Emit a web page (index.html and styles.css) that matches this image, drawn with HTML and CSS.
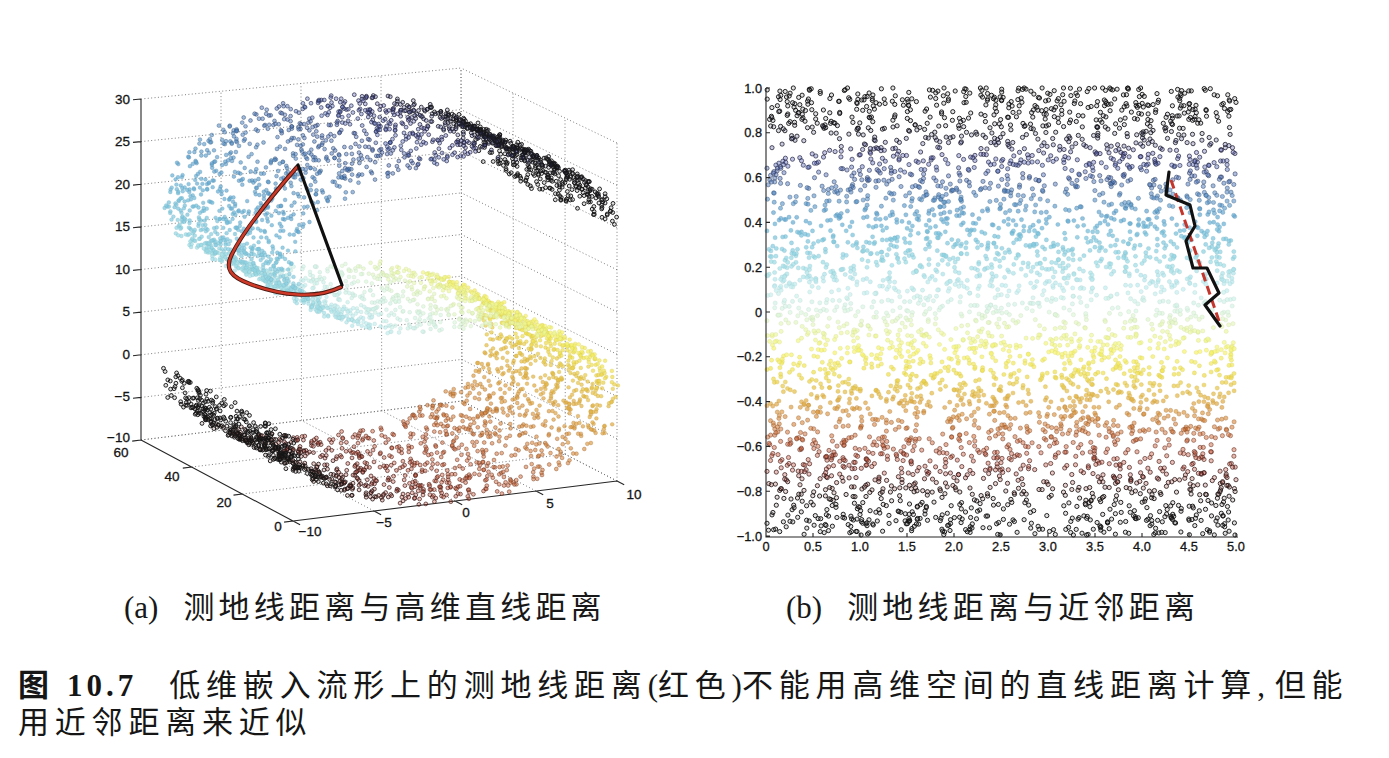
FILE: index.html
```html
<!DOCTYPE html>
<html lang="zh-CN">
<head>
<meta charset="utf-8">
<title>图 10.7 测地线距离</title>
<link rel="stylesheet" href="styles.css">
</head>
<body>
<main class="page">
  <div class="figures">
    <figure class="panel panel-a">
      <svg class="plot plot-a" viewBox="100 60 560 490" xmlns="http://www.w3.org/2000/svg">
        <g id="grid-a" class="grid"></g>
        <g id="axes-a" class="axis"></g>
        <g class="tick-labels">
          <text class="t-end" x="130" y="103.8">30</text>
          <text class="t-end" x="130" y="146.3">25</text>
          <text class="t-end" x="130" y="188.8">20</text>
          <text class="t-end" x="130" y="231.3">15</text>
          <text class="t-end" x="130" y="273.8">10</text>
          <text class="t-end" x="130" y="316.3">5</text>
          <text class="t-end" x="130" y="358.8">0</text>
          <text class="t-end" x="130" y="401.3">−5</text>
          <text class="t-end" x="130" y="442">−10</text>
          <text class="t-mid" x="121" y="457">60</text>
          <text class="t-mid" x="172" y="481">40</text>
          <text class="t-mid" x="224" y="506.5">20</text>
          <text class="t-mid" x="278" y="530.5">0</text>
          <text class="t-mid" x="310" y="536">−10</text>
          <text class="t-mid" x="384" y="527">−5</text>
          <text class="t-mid" x="466" y="517">0</text>
          <text class="t-mid" x="550" y="508">5</text>
          <text class="t-mid" x="634" y="499">10</text>
        </g>
        <g id="points-a"></g>
        <path class="geo-under" d="M297 167 C277 190 246 226 232 254 C224 269 231 277 250 284 C280 295 315 300 341 287"/>
        <path class="geo-red" d="M297 167 C277 190 246 226 232 254 C224 269 231 277 250 284 C280 295 315 300 341 287"/>
        <path class="straight" d="M298 165 L342 285"/>
      </svg>
    </figure>
    <figure class="panel panel-b">
      <svg class="plot plot-b" viewBox="730 70 530 490" xmlns="http://www.w3.org/2000/svg">
        <g id="points-b"></g>
        <g id="axes-b" class="axis"></g>
        <g class="tick-labels small">
          <text class="t-end" x="762" y="92.5">1.0</text>
          <text class="t-end" x="762" y="137.3">0.8</text>
          <text class="t-end" x="762" y="182.1">0.6</text>
          <text class="t-end" x="762" y="226.9">0.4</text>
          <text class="t-end" x="762" y="271.7">0.2</text>
          <text class="t-end" x="762" y="316.5">0</text>
          <text class="t-end" x="762" y="361.3">−0.2</text>
          <text class="t-end" x="762" y="406.1">−0.4</text>
          <text class="t-end" x="762" y="450.9">−0.6</text>
          <text class="t-end" x="762" y="495.7">−0.8</text>
          <text class="t-end" x="762" y="540.5">−1.0</text>
          <text class="t-mid" x="766" y="551">0</text>
          <text class="t-mid" x="813" y="551">0.5</text>
          <text class="t-mid" x="860" y="551">1.0</text>
          <text class="t-mid" x="907" y="551">1.5</text>
          <text class="t-mid" x="954" y="551">2.0</text>
          <text class="t-mid" x="1001" y="551">2.5</text>
          <text class="t-mid" x="1048" y="551">3.0</text>
          <text class="t-mid" x="1095" y="551">3.5</text>
          <text class="t-mid" x="1142" y="551">4.0</text>
          <text class="t-mid" x="1189" y="551">4.5</text>
          <text class="t-mid" x="1236" y="551">5.0</text>
        </g>
        <path class="dash-red" d="M1171 180 L1219 321"/>
        <path class="walk" d="M1169 172 L1166 195 L1190 205 L1195 226 L1186 241 L1193 268 L1207 268 L1219 293 L1205 305 L1220 326"/>
      </svg>
    </figure>
  </div>

  <div class="subcaptions">
    <div class="subcap subcap-a"><span class="tag">(a)</span>测地线距离与高维直线距离</div>
    <div class="subcap subcap-b"><span class="tag">(b)</span>测地线距离与近邻距离</div>
  </div>

  <p class="caption">
    <span class="line"><b class="fig-tag">图</b><b class="fig-num">10.7</b><span class="cap-text">低维嵌入流形上的测地线距离<span class="lat">(</span>红色<span class="lat">)</span>不能用高维空间的直线距离计算<span class="lat comma">, </span>但能</span></span>
    <span class="line">用近邻距离来近似</span>
  </p>
</main>
<script src="script.js"></script>
</body>
</html>
```

FILE: styles.css
```css
* { box-sizing: border-box; }

html, body {
  margin: 0;
  padding: 0;
  background: #ffffff;
}

body {
  width: 1389px;
  height: 758px;
  overflow: hidden;
  color: #141414;
  font-family: "Liberation Serif", "Noto Sans CJK SC", serif;
}

.page {
  display: flex;
  flex-direction: column;
}

.figures {
  display: flex;
  align-items: flex-start;
  gap: 70px;
  height: 590px;
  padding: 60px 0 0 100px;
}

.panel {
  margin: 0;
}

.panel-b {
  margin-top: 10px;
}

.plot {
  display: block;
  overflow: visible;
}

.plot-a {
  width: 560px;
  height: 490px;
}

.plot-b {
  width: 530px;
  height: 490px;
}

/* svg parts */
.grid path {
  fill: none;
  stroke: #707070;
  stroke-width: 0.9;
  stroke-dasharray: 1 2.4;
}

.axis path {
  fill: none;
  stroke: #262626;
  stroke-width: 1.1;
}

.tick-labels text {
  font-family: "Liberation Sans", Arial, sans-serif;
  font-size: 13.5px;
  fill: #141414;
  stroke: #141414;
  stroke-width: 0.3;
}

.tick-labels.small text {
  font-size: 12.8px;
}

.t-end { text-anchor: end; }
.t-mid { text-anchor: middle; }

.geo-under {
  fill: none;
  stroke: #4a1812;
  stroke-width: 4.2;
  stroke-linecap: round;
  stroke-linejoin: round;
}

.geo-red {
  fill: none;
  stroke: #cf3a28;
  stroke-width: 2.4;
  stroke-linecap: round;
  stroke-linejoin: round;
}

.straight {
  fill: none;
  stroke: #101010;
  stroke-width: 3.2;
  stroke-linecap: round;
}

.dash-red {
  fill: none;
  stroke: #c4352c;
  stroke-width: 3;
  stroke-dasharray: 9 5;
}

.walk {
  fill: none;
  stroke: #111111;
  stroke-width: 3.2;
  stroke-linejoin: round;
  stroke-linecap: round;
}

/* captions */
.subcaptions {
  display: flex;
  height: 36px;
  padding-left: 124px;
  font-size: 31px;
  line-height: 36px;
  letter-spacing: 4.2px;
  color: #181818;
  white-space: nowrap;
}

.subcap-a {
  width: 662px;
}

.subcap .tag {
  letter-spacing: 0;
  margin-right: 25px;
}

.caption {
  margin: 38px 0 0 0;
  padding-left: 18px;
  font-size: 31px;
  line-height: 37px;
  letter-spacing: 5.8px;
  color: #161616;
  white-space: nowrap;
}

.caption .line {
  display: block;
}

.fig-tag {
  font-family: "Noto Sans CJK SC", sans-serif;
  font-weight: 700;
  letter-spacing: 0;
}

.fig-num {
  font-family: "Liberation Serif", serif;
  font-weight: 700;
  letter-spacing: 4px;
  margin-left: 18px;
}

.cap-text {
  margin-left: 32px;
}

.lat {
  letter-spacing: 0;
}

.comma {
  margin-right: 2px;
}
```

FILE: script.js
```js
(function () {
  'use strict';
  var PI = Math.PI;

  function mulberry32(a) {
    return function () {
      a |= 0; a = (a + 0x6D2B79F5) | 0;
      var t = Math.imul(a ^ (a >>> 15), 1 | a);
      t = (t + Math.imul(t ^ (t >>> 7), 61 | t)) ^ t;
      return ((t ^ (t >>> 14)) >>> 0) / 4294967296;
    };
  }
  var rand = mulberry32(1007);
  function gauss() {
    var u = rand() || 1e-9, v = rand();
    return Math.sqrt(-2 * Math.log(u)) * Math.cos(2 * PI * v);
  }

  var STOPS = [
    [0.00, '#1a1a1a'], [0.05, '#2a1e1e'], [0.10, '#7a2a24'], [0.14, '#b8382e'],
    [0.20, '#cc5a34'], [0.26, '#d88a3c'], [0.31, '#e4b848'], [0.36, '#f0e050'],
    [0.41, '#f6f470'], [0.46, '#eaf8b0'], [0.50, '#dcf6e4'], [0.55, '#c4eef0'],
    [0.61, '#9cdce6'], [0.67, '#78c2dc'], [0.73, '#5a9ccc'], [0.79, '#4a72b8'],
    [0.85, '#4a4cac'], [0.91, '#2a2a50'], [1.00, '#1a1a1a']
  ];
  function hexRgb(h) {
    return [parseInt(h.slice(1, 3), 16), parseInt(h.slice(3, 5), 16), parseInt(h.slice(5, 7), 16)];
  }
  var SR = STOPS.map(function (s) { return [s[0], hexRgb(s[1])]; });
  function cmap(u) {
    if (u <= 0) return SR[0][1].slice();
    for (var i = 1; i < SR.length; i++) {
      if (u <= SR[i][0]) {
        var a = SR[i - 1], b = SR[i], f = (u - a[0]) / (b[0] - a[0]);
        return [0, 1, 2].map(function (k) { return a[1][k] + (b[1][k] - a[1][k]) * f; });
      }
    }
    return SR[SR.length - 1][1].slice();
  }
  function mix(c, d, w) {
    return [c[0] + (d[0] - c[0]) * w, c[1] + (d[1] - c[1]) * w, c[2] + (d[2] - c[2]) * w];
  }
  function css(c) {
    return 'rgb(' + Math.round(c[0]) + ',' + Math.round(c[1]) + ',' + Math.round(c[2]) + ')';
  }
  function darkness(u) {
    var d = (Math.abs(u - 0.5) - 0.2) / 0.22;
    return Math.max(0, Math.min(1, d));
  }
  function circle(cx, cy, r, u) {
    var col = cmap(u);
    var w = darkness(u);
    var stroke = mix(col, [20, 20, 20], 0.15 + 0.82 * w);
    var fo = (0.72 - 0.58 * w).toFixed(2);
    var so = (0.28 + 0.7 * w).toFixed(2);
    return '<circle cx="' + cx.toFixed(1) + '" cy="' + cy.toFixed(1) + '" r="' + r +
      '" fill="' + css(col) + '" fill-opacity="' + fo + '" stroke="' + css(stroke) +
      '" stroke-opacity="' + so + '" stroke-width="0.95"/>';
  }

  /* --- 3D box projection (corner screen positions) --- */
  var C000 = [293, 521], C100 = [617, 481], C010 = [141, 440], C110 = [462, 401];
  var C001 = [293, 178], C101 = [617, 143], C011 = [141, 99], C111 = [461, 68];
  function lerp(a, b, t) { return [a[0] + (b[0] - a[0]) * t, a[1] + (b[1] - a[1]) * t]; }
  function P(x, y, z) {
    var nx = (x + 10) / 20, ny = y / 60, nz = (z + 10) / 40;
    var a = lerp(C000, C100, nx), b = lerp(C010, C110, nx);
    var c = lerp(C001, C101, nx), d = lerp(C011, C111, nx);
    return lerp(lerp(a, b, ny), lerp(c, d, ny), nz);
  }
  function seg(p, q) {
    return 'M' + p[0].toFixed(1) + ' ' + p[1].toFixed(1) + 'L' + q[0].toFixed(1) + ' ' + q[1].toFixed(1);
  }

  var g = '';
  var xs = [-5, 0, 5, 10], zs = [-10, -5, 0, 5, 10, 15, 20, 25, 30], ys = [0, 20, 40, 60];
  xs.forEach(function (xv) { g += seg(P(xv, 60, -10), P(xv, 60, 30)); });
  zs.forEach(function (zv) { g += seg(P(-10, 60, zv), P(10, 60, zv)); });
  ys.forEach(function (yv) { g += seg(P(10, yv, -10), P(10, yv, 30)); });
  zs.forEach(function (zv) { g += seg(P(10, 0, zv), P(10, 60, zv)); });
  xs.forEach(function (xv) { g += seg(P(xv, 0, -10), P(xv, 60, -10)); });
  [20, 40, 60].forEach(function (yv) { g += seg(P(-10, yv, -10), P(10, yv, -10)); });
  document.getElementById('grid-a').innerHTML = '<path d="' + g + '"/>';

  var ax = seg(P(-10, 60, -10), P(-10, 60, 30)) + seg(P(-10, 60, -10), P(-10, 0, -10)) +
    seg(P(-10, 0, -10), P(10, 0, -10));
  zs.forEach(function (zv) { ax += seg(P(-10, 60, zv), P(-10.5, 60, zv)); });
  ys.forEach(function (yv) { ax += seg(P(-10, yv, -10), P(-10.55, yv, -10)); });
  [-10, -5, 0, 5, 10].forEach(function (xv) { ax += seg(P(xv, 0, -10), P(xv, -2.8, -10)); });
  document.getElementById('axes-a').innerHTML = '<path d="' + ax + '"/>';

  /* --- S-curve data --- */
  var N = 4400, pts = [];
  for (var i = 0; i < N; i++) {
    var t = -1.5 * PI + 3 * PI * rand();
    var y = 50 * rand();
    var x = 10 * Math.sin(t) + 0.22 * gauss();
    var z = (t < 0 ? (1 - Math.cos(t)) : (Math.cos(t) - 1)) * 10 + 10 + 0.22 * gauss();
    var u = (1.5 * PI - t) / (3 * PI);
    var nx = (x + 10) / 20, ny = y / 60, nz = (z + 10) / 40;
    pts.push({ x: x, y: y, z: z, u: u, t: t, depth: 0.53 * nx + 0.69 * ny - 0.5 * nz });
  }

  var sorted = pts.slice().sort(function (a, b) { return b.depth - a.depth; });
  var sa = '';
  sorted.forEach(function (p) {
    var s = P(p.x, p.y, p.z);
    sa += circle(s[0], s[1], 1.9, p.u);
  });
  document.getElementById('points-a').innerHTML = sa;

  var sb = '';
  pts.forEach(function (p) {
    var bx = 766 + (p.y / 10) * 94 + 0.8 * gauss();
    var by = 311 + 224 * (p.t / (1.5 * PI)) + 0.8 * gauss();
    bx = Math.max(767, Math.min(1236, bx));
    by = Math.max(88, Math.min(535, by));
    sb += circle(bx, by, 2.1, p.u);
  });
  document.getElementById('points-b').innerHTML = sb;

  var axb = 'M766 88L766 537L1238 537';
  for (var k = 0; k <= 10; k++) {
    var yy = 88 + 44.8 * k;
    axb += 'M766 ' + yy.toFixed(1) + 'L770 ' + yy.toFixed(1);
    var xx = 766 + 47 * k;
    axb += 'M' + xx + ' 537L' + xx + ' 533';
  }
  document.getElementById('axes-b').innerHTML = '<path d="' + axb + '"/>';
})();
```
